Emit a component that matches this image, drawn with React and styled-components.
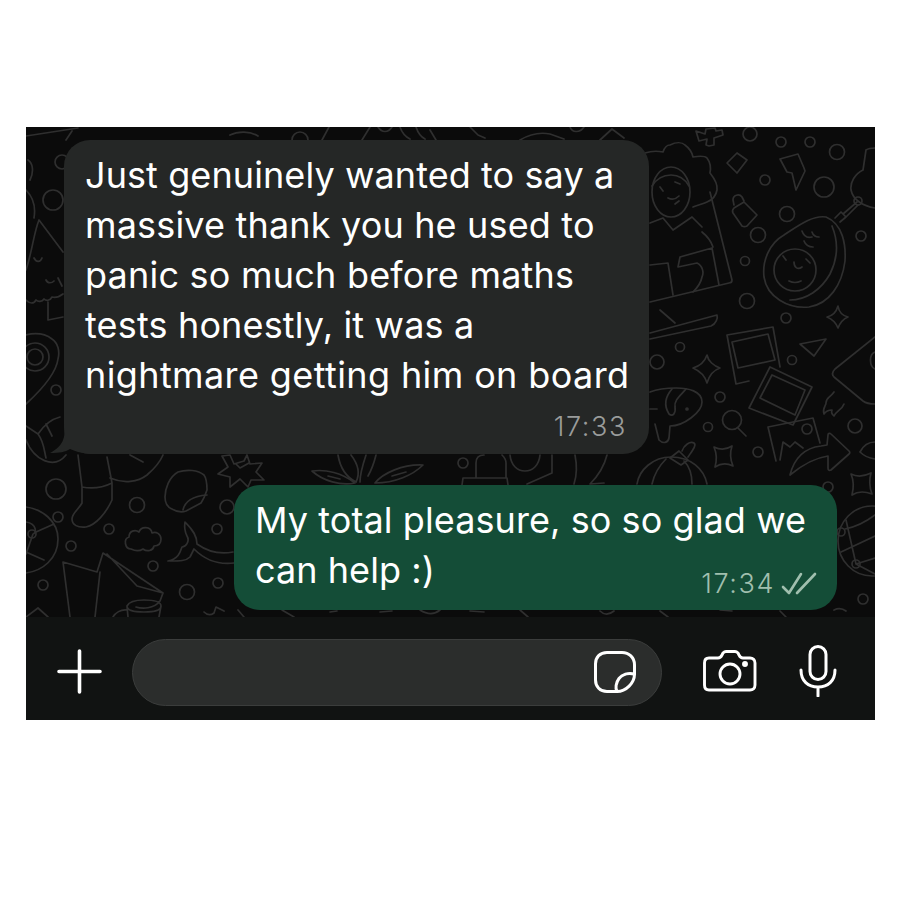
import React from "react";
import styled, { createGlobalStyle } from "styled-components";

const Global = createGlobalStyle`
  html, body { margin: 0; background: #fff; }
  body { font-family: Inter, "Liberation Sans", sans-serif; }
`;
const Page = styled.div`
  width: 900px; height: 900px; box-sizing: border-box;
  padding: 127px 25px 0 26px;
`;
const Phone = styled.div`display: flex; flex-direction: column; height: 593px; background: #0b0b0b;`;
const Chat = styled.div`
  position: relative; overflow: hidden; height: 490px; box-sizing: border-box;
  padding: 13px 38px 0; display: flex; flex-direction: column; gap: 31px;
`;
const Wallpaper = styled.svg`position: absolute; inset: 0;`;
const Bubble = styled.div`
  position: relative; box-sizing: border-box; border-radius: 26px;
  width: ${p => p.$w}px; height: ${p => p.$h}px;
  align-self: ${p => p.$out ? "flex-end" : "flex-start"};
  background: ${p => p.$out ? "#144d37" : "#252726"};
  padding: 10px 21px 0;
  color: #fff; font-size: 36px; font-weight: 380; line-height: 50px;
`;
const Line = styled.div`white-space: nowrap; letter-spacing: ${p => p.$ls}px;`;
const Tail = styled.svg`position: absolute; left: -14px; bottom: 0;`;
const Meta = styled.div`
  position: absolute; right: ${p => p.$r}px; bottom: ${p => p.$b}px;
  display: flex; align-items: center; gap: 6px;
  font-size: 27px; font-weight: 350; line-height: 30px; letter-spacing: 1.6px;
  color: ${p => p.$out ? "#a0bfae" : "#9a9c9b"};
`;
const Composer = styled.div`
  flex: 1; background: #111312; display: flex; align-items: center;
  padding: 5px 36px 0 28px;
`;
const Field = styled.div`
  margin: 2px 0 0 28px; width: 530px; height: 67px; box-sizing: border-box;
  background: #2b2d2c; border: 1px solid #3b3d3c; border-radius: 34px;
  display: flex; align-items: center; justify-content: flex-end; padding-right: 24px;
`;
const IconRow = styled.div`margin-left: 41px; display: flex; align-items: center; gap: 42px;`;

const I = { fill: "none", stroke: "#fff", strokeLinecap: "round", strokeLinejoin: "round" };

const circles = [[750,134,7],[781,142,5],[810,142,5],[837,152,7.5],[765,180,5],[824,187,10],[787,214,7.5],[758,235,7.5],[745,261,4.5],[861,236,5],[747,301,7.5],[680,347,4.5],[657,362,7],[720,397,5],[708,427,4.5],[792,360,4.5],[786,318,5],[758,452,5],[855,426,7],[828,487,5],[56,489,10],[137,505,7.5],[58,517,5],[109,529,5],[71,546,5],[153,566,5],[43,585,5],[187,592,7.5],[218,583,5],[217,529,5],[227,507,7],[62,162,7],[53,200,10],[863,599,5],[56,390,5],[841,532,4],[856,564,4],[35,357,14],[35,357,8]];

const Doodles = () => (
  <Wallpaper width="849" height="490" viewBox="26 127 849 490" fill="none" stroke="#2f2f2f" strokeWidth="1.7" strokeLinecap="round" strokeLinejoin="round">
    {circles.map(([x,y,r],i) => <circle key={i} cx={x} cy={y} r={r}/>)}
    {/* woman with tablet */}
    <path d="M645 153c6-2 13-2 18-1 2-6 4-7 7-7 6-3 12-3 15 0 4 3 7 7 8 12 6-1 12-1 14 1 3 4 4 10 3 15 4 5 8 11 7 17-1 6-5 10-10 12-4 2-9 3-14 5"/>
    <ellipse cx="671" cy="192" rx="19" ry="25"/>
    <path d="M652 186c5-8 12-11 19-11 8 0 14 4 18 11M660 187l3 4M675 182l5 2M668 198c4 2 8 1 11-2M675 204l4-3"/>
    <path d="M650 223l13-5 10 12 19-13 10 10"/>
    <path d="M710 192l22 88c0 2-1 3-3 3l-79 19"/>
    <path d="M650 265l18-2 5 32M680 257l32-9 7 37M680 257l-2 10 19-4c6 3 7 10 5 14-1 6-5 11-9 15M702 232c5 4 9 9 11 15"/>
    <path d="M650 333l67-18c1 3-1 9-6 11l-61 13M660 310l15 13"/>
    {/* cross, diamond, bolt, padlock */}
    <path d="M696 131l9 3 1-5 9-1 1 3 6-1 1 5-9 3v7l-5 1-3-1 1-6-8 2-3-10z"/>
    <path d="M727 163l10-10 10 7-10 13-10-10z"/>
    <path d="M780 159l18-5 6 14 1 3-9 19-4-17-5-1-7-13z"/>
    <path d="M734 208l10-6 13 13-10 11c-2 1-3 1-5 0l-9-13c-1-2 0-4 1-5zM734 205l-1-5a5 5 0 0 1 9-3l2 4"/>
    {/* avocado */}
    <path d="M826 217c-14-2-28 9-42 18-14 8-22 25-20 42 3 20 24 32 45 30 20-3 33-22 36-46 1-16-2-37-19-44z"/>
    <path d="M832 226c7 17 5 34-2 48-9 16-24 26-40 26"/>
    <circle cx="795" cy="270" r="21"/>
    <path d="M789 281c4 2 8 2 12 0M794 262c0 6 4 8 8 5M806 259l4 4M783 256l3 4M802 231c2 6 6 7 10 6M804 241c2 5 6 6 9 6M812 232c1 3 3 5 7 5"/>
    <path d="M835 218l6-6 5 5-6 5M843 214l14-12M846 217l12-12"/><circle cx="858" cy="201" r="4"/>
    <path d="M866 150c3-2 6-2 9-2M866 150l-3 20c-8 4-13 12-12 20 2 10 12 16 24 18"/>
    {/* stars */}
    <path d="M838 306c1 7 6 10 10 11-5 2-8 6-10 11-2-5-6-9-11-11 5-1 9-4 11-11z"/>
    <path d="M707 355c1 6 7 11 13 13-6 2-11 8-13 15-2-7-7-12-14-15 7-2 12-7 14-13z"/>
    <path d="M714 447c6 3 12 3 18-1-2 6-2 13 1 20-6-3-12-3-18 1 2-7 2-13-1-20z"/>
    <path d="M800 344l26-5-12 17-14-12z"/>
    <path d="M851 474c6 3 12 3 20-1-2 7-2 13 1 21-8-3-14-3-20 1 2-8 2-14-1-21z"/>
    {/* polaroids */}
    <path d="M727 335l46-8 7 40M727 335l9 49 13-3"/>
    <path d="M732 342l36-8 7 26-37 8-6-26z"/>
    <path d="M770 367l42 20-19 38-44-17 21-41z"/>
    <path d="M772 375l33 15-10 25-35-17 12-23z"/>
    <path d="M776 461l-8-34 45-9 7 25"/>
    <path d="M780 460l3-18 7 5 5-5 8 6"/><circle cx="807" cy="429" r="5"/>
    <path d="M790 475c4-16 14-27 31-29l6-1 1-10c0-2 2-2 3-1l18 17c1 1 1 2 0 3l-18 16c-2 1-3 0-3-2v-12c-14 2-26 9-38 19z"/>
    {/* rocket right */}
    <path d="M875 337l-40 32c-3 3-3 6-1 8l29 24c4 3 8 3 12 3M875 352c-6 2-6 14 0 17"/>
    <path d="M834 392c-4 6-8 5-8 11 0 3-4 5-2 11 2-3 5-4 8-4-1 3 0 4 2 6 2-5 8-6 10-12"/>
    {/* fish */}
    <path d="M650 392c10-4 18-4 26-4 12 0 26 3 26 14 0 10-18 24-32 24l-1 12c-1 5-6 6-10 2l-4-16"/>
    <path d="M672 389c-7 8-8 17-3 25 4 3 7-1 6-7-1-7 5-11 11-18M650 409h7"/><circle cx="687" cy="409" r="1"/>
    {/* magnifier */}
    <circle cx="732" cy="420" r="9.5"/><path d="M738 428l8 8"/>
    {/* pumpkin */}
    <path d="M637 484c2-14 16-27 34-27 20 0 33 12 36 27"/>
    <path d="M666 459c-8 8-12 16-14 25M684 461c6 6 8 14 8 23"/>
    <path d="M670 458l9-7 9 9-7 5-11-7M682 451c2-6 8-10 12-8 3 2-2 8-6 14"/>
    {/* lower right */}
    <path d="M860 452c3-6 8-10 15-10M860 452c3 3 8 6 15 7"/>
    <ellipse cx="872" cy="541" rx="34" ry="35"/>
    <path d="M845 529c12-2 22-8 30-14M841 552l34-16M856 564l19-6M846 520l10 44M875 574l-19-10"/>
    <path d="M834 610c4-2 8-2 12 1"/>
    {/* leg */}
    <path d="M78 455l4 32v16c-3 6-10 10-10 16 0 6 6 9 14 8 10-2 20-14 26-27l0-17-5-26M82 487c10 2 20 1 30-4M110 478c14 6 28 4 37-3 7-6 13-13 16-20M130 455l13 7"/>
    {/* top-left leaf under bubble */}
    <path d="M60 417c-8 2-16 8-22 17l-12-8M26 440c8 20 28 30 40 15M38 434c6 8 6 16 8 24M46 424l6 12"/>
    {/* sticker */}
    <path d="M165 497c0-8 4-20 13-25 9-3 20-2 26 3 3 4 3 10 3 15-2 6-4 10-6 13l-15 8c-5 2-9 1-14-2-5-2-7-7-7-12z"/>
    <path d="M183 510c2-9 10-14 24-15"/>
    {/* star with check */}
    <path d="M230 455l4 9 10-3 3-6 3 9 12-1-6 9 8 8-13 0-3 7-8-8-10 8v-10l-12-3 10-7-6-11z"/>
    <path d="M236 464l4 4 9-5"/>
    {/* leaves between bubbles */}
    <path d="M312 471c14-2 30 2 43 12-14 3-32-2-43-12zM328 476l12 3M375 483c8-10 28-19 48-18-10 10-28 18-48 18zM392 476l14-4"/>
    <path d="M338 455c2 12 8 22 18 27 4-8 2-18-5-27M366 455c-4 12-6 20-6 27M376 455c-2 8-4 14-8 21"/>
    <path d="M476 478v-15c0-6 4-8 8-8M506 478v-15c0-4-2-6-4-8M463 478h44l1 7M463 478l-1 7"/>
    <circle cx="463" cy="463" r="5"/>
    <path d="M510 455c1 10 7 16 15 16s14-6 15-16M527 484l25-11v-18M575 455c2 10 2 20-1 29M607 455c-3 12-10 22-17 29l14-1"/>
    {/* cloud */}
    <path d="M131 549c-6 0-8-10-2-12 0-6 6-8 10-5 2-6 12-6 13 1 4-2 9 1 9 6 0 4-2 7-7 7-1 5-7 6-11 3-3 2-6 3-12 0z"/>
    {/* globe */}
    <path d="M26 507c16 2 32 14 32 32 0 20-16 32-32 34M26 522c12 2 10 12 7 12l-7 20M26 552l18 8M36 532l18-8"/>
    <circle cx="32" cy="534" r="4"/>
    {/* whale */}
    <path d="M168 561c10-2 12-8 14-14 4 0 8-6 5-11-2-4-3-8-2-14 8 8 12 14 12 22 14 10 26 10 36 8M170 561c10 0 16 0 20-4l4-8c10 10 24 16 40 14"/>
    {/* tent */}
    <path d="M63 562l34 10 6-19 60 40-3 8c-6 8-18 8-24 6M63 562l7 55M100 572l-5 45M107 554l30 32 26 7M127 606c2-4 8-6 17-6 10 0 17 2 17 6s-7 6-17 6-17-2-17-6zM127 606l1 11M161 606l-2 11M127 610c-6-1-12 3-14 7"/>
    <path d="M26 617l12-9 10 9M204 612c3 3 6 4 10 1l2-6 8 4M238 610l6 7"/>
    {/* under bubble 2 */}
    <path d="M282 610l12 7M330 612l7-1M380 612l12-1M420 610c8 5 14 5 20 0M470 611l14 1M520 610l8 7M600 611c4 4 9 4 14 0M660 611l8 6M720 610l12 1M780 611l6 6"/>
    {/* top strip */}
    <path d="M26 136l52-8M72 131l-6 9M230 135c8-4 20-4 28 1M292 140a8 8 0 0 1 16 0M322 140l7-13M362 140l8-13M378 127c4 6 10 6 14 0M400 127c2 6 6 10 10 12M416 127c2 6 5 10 9 12M430 130l6 10M470 127l8 8 7 3M520 140c10-6 20-8 30-6l14 5M570 127c2 6 10 6 14 0M600 140l12-11 12 9"/>
    {/* left column */}
    <path d="M26 270c6-18 8-38 13-50l24 32"/>
    <path d="M34 258c2 4 6 5 8 0M26 300c4 4 8 4 10 0 2 2 6 2 8-1 2 2 6 2 8-2 3 1 7 0 11-3M46 280c2 4 6 3 8 1M58 278l4 8M48 302v18l15-3"/>
    <path d="M26 335c8-2 18-2 26 4 6 4 8 12 6 20-2 16-20 34-32 45"/>
    <path d="M28 160c5 3 6 12 2 20M26 190c6 6 10 16 8 28"/>
  </Wallpaper>
);

export default function App() {
  return (
    <Page>
      <Global />
      <Phone>
        <Chat>
          <Doodles />
          <Bubble $w={585} $h={314}>
            <Tail width="40" height="30" viewBox="0 0 40 30">
              <path d="M14 0c2 14-1 22-14 29 10 0 15-1 20-4 5 2 10 4 20 5V0z" fill="#252726"/>
            </Tail>
            <Line $ls={0.09}>Just genuinely wanted to say a</Line>
            <Line $ls={0.17}>massive thank you he used to</Line>
            <Line $ls={0.22}>panic so much before maths</Line>
            <Line $ls={0.16}>tests honestly, it was a</Line>
            <Line $ls={0.39}>nightmare getting him on board</Line>
            <Meta $r={22} $b={12}>17:33</Meta>
          </Bubble>
          <Bubble $out $w={603} $h={125}>
            <Line $ls={0.08}>My total pleasure, so so glad we</Line>
            <Line $ls={0.06}>can help :)</Line>
            <Meta $out $r={20} $b={11}>
              17:34
              <svg width="36" height="24" viewBox="0 0 36 24" fill="none" stroke="#a0bfae" strokeWidth="2.600" strokeLinecap="round" strokeLinejoin="round">
                <path d="M2 15l6 6L20 2M16 21L34 2"/>
              </svg>
            </Meta>
          </Bubble>
        </Chat>
        <Composer>
          <svg width="50" height="50" viewBox="0 0 50 50" {...I} strokeWidth="3.600">
            <path d="M25.500 5v41M5 25.500h41"/>
          </svg>
          <Field>
            <svg width="44" height="44" viewBox="0 0 44 44" {...I} strokeWidth="3">
              <path d="M14 2.500h15c7 0 12.500 5 12.500 12.500v9c0 9-8.500 17.500-17.500 17.500H14C7 41.500 2.500 36.500 2.500 30V14C2.500 7 7 2.500 14 2.500z"/>
              <path d="M24 41.500c-2-3-1-9 2-13 3-4 9-6 15.500-4.500"/>
            </svg>
          </Field>
          <IconRow>
            <svg width="54" height="42" viewBox="0 0 54 42" {...I} strokeWidth="2.900">
              <path d="M6 8h9c2 0 3-1 4-3l1-2c1-1 2-1.500 3-1.500h9c1 0 2 .5 3 1.500l1 2c1 2 2 3 4 3h7c3 0 5 2 5 5v22c0 3-2 5-5 5H6c-3 0-4.500-2-4.500-5V13c0-3 1.500-5 4.500-5z"/>
              <circle cx="27" cy="24" r="10"/>
              <circle cx="42" cy="14" r="1.500" fill="#fff"/>
            </svg>
            <svg width="38" height="52" viewBox="0 0 38 52" {...I} strokeWidth="3">
              <rect x="11" y="1.500" width="16" height="33" rx="8"/>
              <path d="M2 25c0 11 7 17 17 17s17-6 17-17M19 42v9"/>
            </svg>
          </IconRow>
        </Composer>
      </Phone>
    </Page>
  );
}
